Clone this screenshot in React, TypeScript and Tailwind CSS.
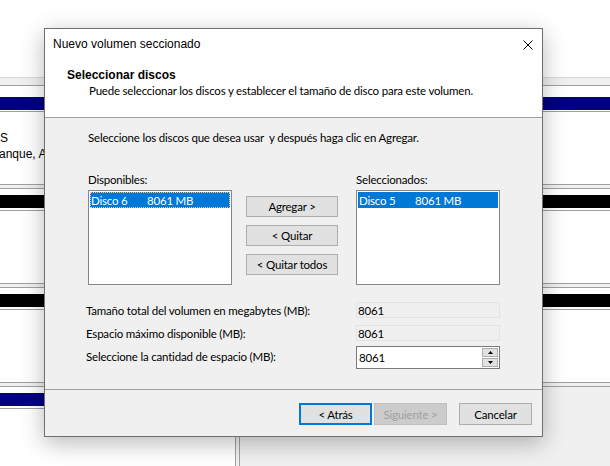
import React from 'react'

const font = "font-['Lato','Liberation_Sans',Arial,sans-serif]"
const arial = "font-['Liberation_Sans',Arial,sans-serif] text-[12px] tracking-normal"
const btn =
  'h-[21px] flex items-center justify-center border border-[#adadad] bg-[#e1e1e1] text-black'

function Line({ c = 'bg-[#a0a0a0]' }: { c?: string }) {
  return <div className={`h-px ${c}`} />
}

function Band({ gap, bar }: { gap: string; bar: string }) {
  return (
    <>
      <Line />
      <div className={`${gap} bg-[#f0f0f0]`} />
      <Line />
      <div className="h-[6px] bg-white" />
      <div className={`h-[13px] ${bar}`} />
      <div className="h-[2px] bg-white" />
      <Line />
    </>
  )
}

function DiskList({ name, focus }: { name: string; focus?: boolean }) {
  return (
    <div className="h-[95px] w-[144px] border border-[#828790] bg-white p-px">
      <div
        className={`h-[16px] flex items-center bg-[#0078d7] text-white pl-px ${
          focus ? 'outline-1 outline-dotted outline-[#f3c98b] -outline-offset-1' : ''
        }`}
      >
        <span className="w-[56px]">{name}</span>
        <span>8061 MB</span>
      </div>
    </div>
  )
}

function Field({ label, value }: { label: string; value: string }) {
  return (
    <div className="flex items-center">
      <span className="w-[270px] -ml-[2px]">{label}</span>
      <div className="h-[16px] w-[144px] border border-[#e3e3e3] bg-[#f0f0f0] flex items-center pl-px">
        {value}
      </div>
    </div>
  )
}

export default function App() {
  return (
    <div
      className={`relative w-[610px] h-[466px] overflow-hidden bg-white text-[11.5px] tracking-[-0.2px] leading-[15px] text-black ${font}`}
    >
      {/* fondo: administración de discos */}
      <div className="flex flex-col w-full h-full">
        <div className="h-[77px] bg-white" />
        <Line c="bg-[#d8d8d8]" />
        <div className="h-[7px] bg-[#f0f0f0]" />
        <Line />
        <div className="h-[11px] bg-white" />
        <div className="h-[13px] bg-[#000080]" />
        <div className="h-px bg-white" />
        <Line />
        <div className={`h-[72px] bg-white pt-[18px] leading-[16px] ${arial}`}>
          <div>S</div>
          <div className="-ml-[1px] whitespace-nowrap">anque, Archivo de paginación</div>
        </div>
        <Band gap="h-[3px]" bar="bg-black" />
        <div className="h-[72px] bg-white" />
        <Band gap="h-[3px]" bar="bg-black" />
        <div className="h-[72px] bg-white" />
        <Line />
        <div className="h-[3px] bg-[#f0f0f0]" />
        <Line />
        <div className="flex flex-1">
          <div className="w-[235px] flex flex-col bg-white">
            <div className="h-[6px]" />
            <div className="h-[13px] bg-[#000080]" />
            <div className="h-[2px]" />
            <Line />
          </div>
          <div className="w-px bg-[#a0a0a0]" />
          <div className="w-[3px] bg-[#f0f0f0]" />
          <div className="w-px bg-[#a0a0a0]" />
          <div className="flex-1 bg-[#f0f0f0]" />
        </div>
      </div>

      {/* diálogo */}
      <div className="absolute left-[44px] top-[28px] w-[499px] h-[409px] flex flex-col border border-[#6f6f6f] bg-[#f0f0f0] shadow-[0_6px_22px_rgba(0,0,0,0.28)]">
        <div className="h-[31px] bg-white flex items-center justify-between pl-[8px] pr-[9px]">
          <span className={arial}>Nuevo volumen seccionado</span>
          <svg width="10" height="10" viewBox="0 0 10 10" className="text-black">
            <path d="M0.5 0.5 L9.5 9.5 M9.5 0.5 L0.5 9.5" stroke="currentColor" strokeWidth="1" />
          </svg>
        </div>

        <div className="h-[58px] bg-white border-b border-[#a0a0a0] pt-[8px]">
          <div className={`pl-[22px] font-bold ${arial}`}>Seleccionar discos</div>
          <div className="pl-[44px]">
            Puede seleccionar los discos y establecer el tamaño de disco para este volumen.
          </div>
        </div>

        <div className="h-[272px] border-b border-[#a0a0a0] pl-[43px] pt-[12px]">
          <div>Seleccione los discos que desea usar &nbsp;y después haga clic en Agregar.</div>

          <div className="flex mt-[27px]">
            <div className="flex flex-col gap-[3px]">
              <span>Disponibles:</span>
              <DiskList name="Disco 6" focus />
            </div>
            <div className="ml-[14px] w-[92px] pt-[24px] flex flex-col gap-[8px]">
              <div className={btn}>Agregar &gt;</div>
              <div className={btn}>&lt; Quitar</div>
              <div className={btn}>&lt; Quitar todos</div>
            </div>
            <div className="ml-[18px] flex flex-col gap-[3px]">
              <span>Seleccionados:</span>
              <DiskList name="Disco 5" />
            </div>
          </div>

          <div className="mt-[17px] flex flex-col gap-[7px]">
            <Field label="Tamaño total del volumen en megabytes (MB):" value="8061" />
            <Field label="Espacio máximo disponible (MB):" value="8061" />
          </div>

          <div className="mt-[5px] flex items-center">
            <span className="w-[270px] -ml-[2px] -mt-[2px]">Seleccione la cantidad de espacio (MB):</span>
            <div className="h-[23px] w-[144px] border border-[#7a7a7a] bg-white flex items-center">
              <span className="flex-1 pl-[2px]">8061</span>
              <div className="w-[16px] h-full flex flex-col gap-px py-px mr-px">
                <div className="flex-1 border border-[#adadad] bg-[#e1e1e1] flex items-center justify-center">
                  <svg width="5" height="3" viewBox="0 0 5 3">
                    <path d="M2.5 0 L5 3 L0 3 Z" fill="#000" />
                  </svg>
                </div>
                <div className="flex-1 border border-[#adadad] bg-[#e1e1e1] flex items-center justify-center">
                  <svg width="5" height="3" viewBox="0 0 5 3">
                    <path d="M0 0 L5 0 L2.5 3 Z" fill="#000" />
                  </svg>
                </div>
              </div>
            </div>
          </div>
        </div>

        <div className="flex justify-end pt-[13px] pr-[10px]">
          <div className="w-[73px] h-[22px] flex items-center justify-center border-2 border-[#0078d7] bg-[#e1e1e1]">
            &lt; Atrás
          </div>
          <div className="ml-[2px] w-[73px] h-[22px] flex items-center justify-center border border-[#bfbfbf] bg-[#cccccc] text-[#a0a0a0]">
            Siguiente &gt;
          </div>
          <div className="ml-[12px] w-[73px] h-[22px] flex items-center justify-center border border-[#adadad] bg-[#e1e1e1]">
            Cancelar
          </div>
        </div>
      </div>
    </div>
  )
}
